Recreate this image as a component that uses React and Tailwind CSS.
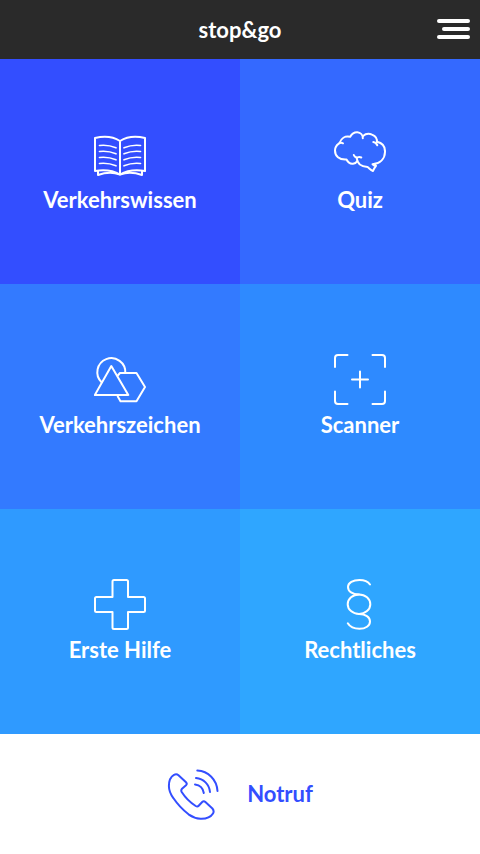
import React from 'react';

function Icon({ children }) {
  return (
    <svg
      viewBox="0 0 52 52"
      className="w-[52px] h-[52px] shrink-0"
      fill="none"
      stroke="currentColor"
      strokeWidth="2"
      strokeLinecap="round"
      strokeLinejoin="round"
      aria-hidden="true"
    >
      {children}
    </svg>
  );
}

function BookIcon() {
  return (
    <Icon>
      <path d="M26 12C19 7.5 9 7 1 9V42C10 40.5 19 41.5 26 45.5C33 41.5 42 40.5 51 42V9C43 7 33 7.5 26 12V45" />
      <path d="M4 42V46C11 43.5 19 43 26 45.5C33 43 41 43.5 48 46V42" />
      <path strokeWidth="1.7" d="M5.5 16.5Q14 15.5 22 18.8M5.5 22.5Q14 21.5 22 24.8M5.5 28.5Q14 27.5 22 30.8M5.5 34.5Q14 33.5 22 36.8" />
      <path strokeWidth="1.7" d="M46.5 16.5Q38 15.5 30 18.8M46.5 22.5Q38 21.5 30 24.8M46.5 28.5Q38 27.5 30 30.8M46.5 34.5Q38 33.5 30 36.8" />
    </Icon>
  );
}

function BrainIcon() {
  return (
    <Icon>
      <path d="M9 14.3C7.5 13.6 6 13.8 4.8 14.6C2 16.5 1 19 1 21.5C1 27 5 31 12.5 30.5C14 33.5 16.5 35 19 34.7C21 34.5 22.5 33.5 23.3 32" />
      <path d="M5.5 14C7 9.5 11 6.5 16.2 7.8C18 4.5 20.5 3.2 23.3 3.3C26.5 3.5 29 6 28.8 9.3" />
      <path d="M29 7C31.5 4.8 35 4.3 38 5.6C41.5 7 43.5 10 42.8 13.5M39.3 13C41 13.2 42.3 14.2 43.3 16.3" />
      <path d="M43 12.8C48.5 14 51.2 18 51 23C50.8 29.5 46.5 34.5 38.5 35.2C39.3 36.4 40.5 36.9 42 36.8C40.8 38.3 39.8 40 39 42C36.8 41 35.5 39.5 33.5 38C26.5 37.5 23 34 22.7 28.8" />
      <path d="M19.8 26C20.5 27.8 22 28.7 23.5 28.4C24.8 28 26 28 27.3 28.5" />
    </Icon>
  );
}

function ShapesIcon() {
  return (
    <Icon>
      <path d="M7.6 28.2A14 14 0 1 1 31.3 19" />
      <path d="M17.3 12L34.3 41H.8Z" />
      <path d="M23.8 21.5L26 19H42.5L51 33L42.5 47.2H26.5L23.8 42.5" />
    </Icon>
  );
}

function ScannerIcon() {
  return (
    <Icon>
      <path d="M1 13V4Q1 1 4 1H13.5M38.5 1H48Q51 1 51 4V13M51 37.5V47Q51 50 48 50H38.5M13.5 50H4Q1 50 1 47V37.5" />
      <path d="M26 17.5V33.5M18 25.5H34" />
    </Icon>
  );
}

function CrossIcon() {
  return (
    <Icon>
      <path d="M20 1H32.5Q34 1 34 2.5V18H49.5Q51 18 51 19.5V31.5Q51 33 49.5 33H34V48.5Q34 50 32.5 50H20Q18.5 50 18.5 48.5V33H2.5Q1 33 1 31.5V19.5Q1 18 2.5 18H18.5V2.5Q18.5 1 20 1Z" />
    </Icon>
  );
}

function ParagraphIcon() {
  return (
    <Icon>
      <path d="M36 5.5C34 2.5 30 1 25.5 1C19 1 14 3.8 14 8C14 12.5 18.5 15.5 25 15.5" />
      <ellipse cx="25" cy="25.2" rx="11.3" ry="9.7" />
      <path d="M25 35C31.5 35 36 38 36 42.5C36 46.8 31.5 49.8 25.5 49.8C20 49.8 16 48 13.8 44.3" />
    </Icon>
  );
}

function PhoneIcon() {
  return (
    <Icon>
      <path d="M11.5 7.2L19 14.2Q20.5 15.8 19 17.3L15 20.8Q13.7 22.2 14.7 24C18.2 29.5 23.2 34.5 28.7 38Q30.5 39 31.7 37.7L35.2 34Q36.7 32.5 38.4 34L45.4 40.5Q47.5 43 46 45.5C43.5 49.5 39 51 33.5 50.8C29 50.5 25.5 49 21.5 46.3C16 42 11 37 6.5 30.3C3.3 26 1.9 22 1.9 18C1.9 12.5 4 8.5 7 6.8Q9.5 5.6 11.5 7.2Z" />
      <path d="M30.3 2.6C41.3 3.1 49.8 11.6 50.5 23M29 10C36.5 10.7 42.3 16.2 43 24M28 16.4C32.8 17 36.1 20.2 36.8 25" />
    </Icon>
  );
}

const tiles = [
  { label: 'Verkehrswissen', icon: BookIcon, bg: 'bg-[#334eff]' },
  { label: 'Quiz', icon: BrainIcon, bg: 'bg-[#3469ff]' },
  { label: 'Verkehrszeichen', icon: ShapesIcon, bg: 'bg-[#337aff]' },
  { label: 'Scanner', icon: ScannerIcon, bg: 'bg-[#2e8aff]' },
  { label: 'Erste Hilfe', icon: CrossIcon, bg: 'bg-[#2f9aff]' },
  { label: 'Rechtliches', icon: ParagraphIcon, bg: 'bg-[#2fa6ff]' },
];

export default function App() {
  return (
    <div className="min-h-screen flex flex-col bg-white font-['Lato',sans-serif] font-bold text-[22px] leading-[30px]">
      {/* Header */}
      <header className="h-[59px] grid grid-cols-[1fr_auto_1fr] items-center px-2 bg-[#2a2a2a] text-white">
        <h1 className="col-start-2">stop&amp;go</h1>
        <button type="button" aria-label="Menü" className="justify-self-end flex flex-col items-end gap-1 px-0.5 pb-0.5 cursor-pointer">
          <span className="w-[33px] h-1 rounded-full bg-white" />
          <span className="w-7 h-1 rounded-full bg-white" />
          <span className="w-[33px] h-1 rounded-full bg-white" />
        </button>
      </header>

      {/* Tiles */}
      <main className="flex-1 grid grid-cols-2 auto-rows-fr">
        {tiles.map(({ label, icon: TileIcon, bg }) => (
          <a key={label} href="#" className={`flex flex-col items-center justify-center gap-1 text-white ${bg}`}>
            <TileIcon />
            <span>{label}</span>
          </a>
        ))}
      </main>

      {/* Emergency call */}
      <a href="#" className="h-[120px] flex items-center justify-center gap-7 text-[#334eff]">
        <PhoneIcon />
        <span>Notruf</span>
      </a>
    </div>
  );
}
